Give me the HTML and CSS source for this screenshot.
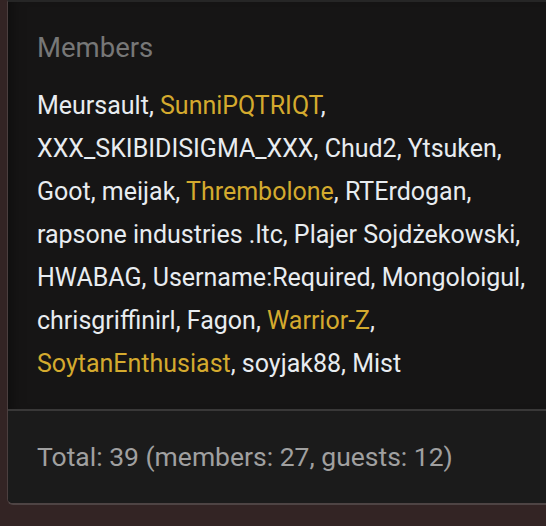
FILE: index.html
```html
<!DOCTYPE html>
<html>
<head>
<meta charset="utf-8">
<link rel="stylesheet" href="styles.css">
</head>
<body>
<div class="panel">
  <div class="panel-body">
    <h3 class="title">Members</h3>
    <p class="list">Meursault, <span class="gold">SunniPQTRIQT</span>, XXX_SKIBIDISIGMA_XXX, Chud2, Ytsuken, Goot, meijak, <span class="gold">Thrembolone</span>, RTErdogan, rapsone industries .ltc, Plajer Sojdżekowski, HWABAG, Username:Required, Mongoloigul, chrisgriffinirl, Fagon, <span class="gold">Warrior-Z</span>, <span class="gold">SoytanEnthusiast</span>, soyjak88, Mist</p>
  </div>
  <div class="panel-foot">Total: 39 (members: 27, guests: 12)</div>
</div>
</body>
</html>
```
FILE: styles.css
```css
html, body {
  margin: 0;
  padding: 0;
  background: #332424;
  font-family: Roboto, "Noto Sans", sans-serif;
}
body {
  height: 526px;
  overflow: hidden;
}
.panel {
  margin-left: 7px;
  width: 560px;
  border-left: 1px solid #4b3f3f;
  border-bottom: 2px solid #4e4444;
  border-top: 2px solid #262626;
  border-bottom-left-radius: 6px;
  background: #161515;
  overflow: hidden;
}
.panel-body {
  padding: 30px 0 24px 29px;
  box-shadow: inset 14px 0 14px -10px rgba(0,0,0,0.35);
}
.title {
  margin: 0;
  font-size: 27.5px;
  font-weight: 400;
  color: #777777;
  line-height: 32px;
}
.list {
  margin: 20px 0 0 0;
  width: 505px;
  font-size: 25px;
  line-height: 43px;
  color: #e8ecf0;
}
.gold {
  color: #d4aa2e;
}
.panel-foot {
  border-top: 2px solid #393838;
  background: #1b1b1b;
  padding: 29px 0 29px 29px;
  font-size: 26.5px;
  line-height: 34px;
  color: #a0a0a0;
}
```
